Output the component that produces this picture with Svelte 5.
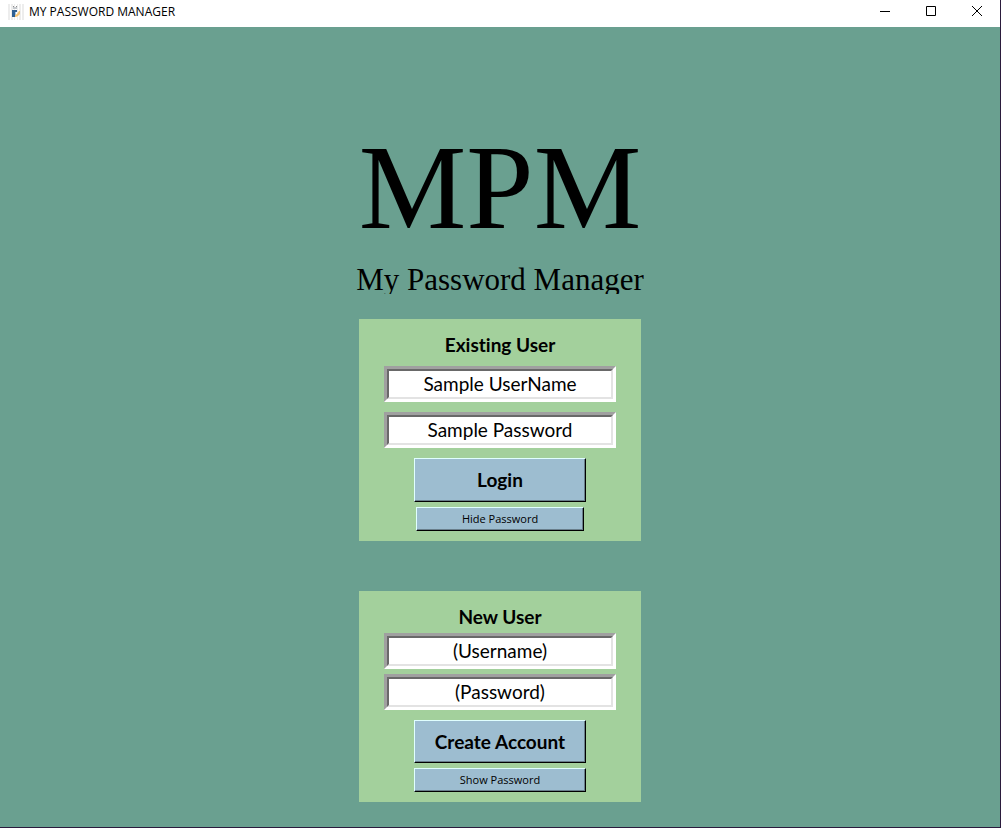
<script>
  let existingName = $state('Sample UserName');
  let existingPassword = $state('Sample Password');
  let newName = $state('(Username)');
  let newPassword = $state('(Password)');
  let existingVisible = $state(true);
  let newVisible = $state(true);
</script>

<div class="window">
  <header class="titlebar">
    <svg class="app-icon" width="16" height="16" viewBox="0 0 16 16" aria-hidden="true">
      <path d="M0 0h2v16H0zM3 0h2v16H3zM6 0h1v16H6zM9 0h1v16H9zM11 0h2v16h-2zM14 0h2v16h-2z" fill="#ededed" />
      <path d="M5 2h1v1H5zM8 2h1v1H8z" fill="#8c8c8c" />
      <path d="M5 3h4v2H5z" fill="#c4c8cc" />
      <path d="M4 6h5v2H7v5H4z" fill="#2f6093" />
      <path d="M7 8h1v3H7z" fill="#9cc3e6" />
      <path d="M7 11l2-1 2-3h1v3l-2 2-2 1H7z" fill="#f4c376" />
    </svg>
    <span class="caption">MY PASSWORD MANAGER</span>
    <div class="controls">
      <button aria-label="Minimize">
        <svg width="12" height="12" viewBox="0 0 12 12"><path d="M1 5.500h10" /></svg>
      </button>
      <button aria-label="Maximize">
        <svg width="12" height="12" viewBox="0 0 12 12"><path d="M1.500 .500h9v9h-9z" /></svg>
      </button>
      <button aria-label="Close">
        <svg width="12" height="12" viewBox="0 0 12 12"><path d="M1 0l10 10M11 0L1 10" /></svg>
      </button>
    </div>
  </header>

  <main>
    <h1>MPM</h1>
    <p class="subtitle">My Password Manager</p>

    <form class="panel existing" onsubmit={(e) => e.preventDefault()}>
      <h2>Existing User</h2>
      <div class="fields">
        <div class="field"><input aria-label="Username" type="text" bind:value={existingName} /></div>
        <div class="field">
          <input aria-label="Password" type={existingVisible ? 'text' : 'password'} bind:value={existingPassword} />
        </div>
      </div>
      <button class="primary" type="submit">Login</button>
      <button class="toggle" type="button" onclick={() => (existingVisible = !existingVisible)}>Hide Password</button>
    </form>

    <form class="panel new" onsubmit={(e) => e.preventDefault()}>
      <h2>New User</h2>
      <div class="fields">
        <div class="field"><input aria-label="New username" type="text" bind:value={newName} /></div>
        <div class="field">
          <input aria-label="New password" type={newVisible ? 'text' : 'password'} bind:value={newPassword} />
        </div>
      </div>
      <button class="primary" type="submit">Create Account</button>
      <button class="toggle" type="button" onclick={() => (newVisible = !newVisible)}>Show Password</button>
    </form>
  </main>
</div>

<style>
  :global(body) {
    margin: 0;
  }

  .window {
    box-sizing: border-box;
    min-height: 100vh;
    display: flex;
    flex-direction: column;
    background: #6aa090;
    border-right: 1px solid #2b1b3d;
    border-bottom: 1px solid #2b1b3d;
    color: #000;
    font-variant-ligatures: none;
  }

  .titlebar {
    display: flex;
    align-items: center;
    height: 27px;
    padding-left: 8px;
    background: #fff;
    font-family: 'Open Sans', 'Noto Sans', sans-serif;
    font-size: 12px;
    line-height: 16px;
  }

  .app-icon {
    margin: 0 5px 4px 0;
  }

  .caption {
    margin-bottom: 4px;
  }

  .controls {
    display: flex;
    margin-left: auto;
  }

  .controls button {
    display: flex;
    align-items: center;
    justify-content: center;
    width: 46px;
    height: 27px;
    padding: 0 0 3px;
    border: 0;
    background: none;
  }

  .controls path {
    fill: none;
    stroke: #000;
    stroke-width: 1;
  }

  main {
    display: flex;
    flex-direction: column;
    align-items: center;
    padding: 92px 0 24px;
  }

  h1 {
    margin: 0;
    font-family: 'Liberation Serif', 'Times New Roman', serif;
    font-size: 121px;
    font-weight: normal;
    line-height: 136px;
  }

  .subtitle {
    height: 32px;
    margin: 7px 0 25px;
    overflow: hidden;
    font-family: 'Liberation Serif', 'Times New Roman', serif;
    font-size: 31px;
    line-height: 36px;
  }

  .panel {
    box-sizing: border-box;
    display: flex;
    flex-direction: column;
    align-items: center;
    width: 282px;
    padding: 14px 25px 10px;
    background: #a3d09c;
  }

  .new {
    margin-top: 50px;
  }

  h2 {
    margin: 0;
    font-family: Lato, sans-serif;
    font-size: 19px;
    line-height: 24px;
  }

  .fields {
    display: flex;
    flex-direction: column;
    gap: 10px;
    width: 100%;
    margin: 9px 0 10px;
  }

  .new .fields {
    gap: 5px;
    margin-top: 4px;
  }

  .field {
    border: 3px solid;
    border-color: #a0a0a0 #fff #fff #a0a0a0;
  }

  input {
    display: block;
    box-sizing: border-box;
    width: 100%;
    height: 30px;
    padding: 0 0 2px;
    border: 2px solid;
    border-color: #696969 #e3e3e3 #e3e3e3 #696969;
    border-radius: 0;
    outline: none;
    background: #fff;
    color: #000;
    font-family: Lato, sans-serif;
    font-size: 19px;
    line-height: 24px;
    font-variant-ligatures: none;
    text-align: center;
  }

  .primary,
  .toggle {
    box-sizing: border-box;
    padding: 0;
    border: 1px solid;
    border-color: #e0ffff #000 #000 #e0ffff;
    background: #9dbdd0;
    box-shadow: inset -1px -1px #697e8b;
    color: #000;
  }

  .primary {
    width: 172px;
    height: 44px;
    font-family: Lato, sans-serif;
    font-size: 19px;
    font-weight: bold;
    line-height: 24px;
  }

  .new .primary {
    height: 43px;
  }

  .toggle {
    width: 168px;
    height: 24px;
    margin-top: 5px;
    font-family: 'Open Sans', 'Noto Sans', sans-serif;
    font-size: 11px;
    line-height: 16px;
  }

  .new .toggle {
    width: 172px;
  }
</style>
